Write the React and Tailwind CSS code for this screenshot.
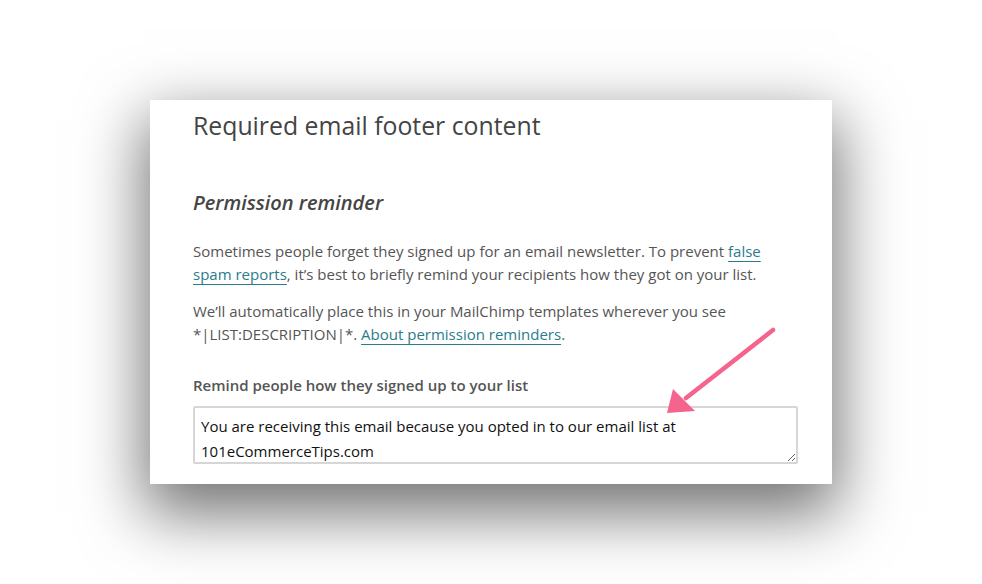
import React from 'react';

const Arrow = () => (
  <svg className="absolute left-[660px] top-[322px]" width="125" height="100" viewBox="0 0 125 100">
    {/* shaft */}
    <line x1="113" y1="8" x2="26" y2="76" stroke="#f5648c" strokeWidth="4.5" strokeLinecap="round" />
    {/* head */}
    <polygon points="7,91 13,67 35,89" fill="#f5648c" />
  </svg>
);

const App = () => {
  return (
    <div className="relative w-[982px] h-[584px] bg-white overflow-hidden" style={{ fontFamily: '"Open Sans", sans-serif' }}>
      <div className="pt-[100px] pl-[150px]">
        <div className="w-[682px] h-[384px] bg-white pl-[43px] pr-[34px] pt-[8px] shadow-[0_24px_60px_6px_rgba(0,0,0,0.55)]">
          <h1 className="text-[24.8px] leading-[34px] text-[#444]">Required email footer content</h1>

          <h2 className="mt-[47px] text-[20px] leading-[28px] italic font-semibold text-[#454545]">
            Permission reminder
          </h2>

          <p className="mt-[23px] text-[15px] leading-[23px] text-[#555]">
            Sometimes people forget they signed up for an email newsletter. To prevent{' '}
            <a className="text-[#2a7c8c] underline underline-offset-[4px] decoration-[#2a7c8c]">false spam reports</a>, it’s
            best to briefly remind your recipients how they got on your list.
          </p>

          <p className="mt-[14px] text-[15px] leading-[23px] text-[#555]">
            We’ll automatically place this in your MailChimp templates wherever you see *|LIST:DESCRIPTION|*.{' '}
            <a className="text-[#2a7c8c] underline underline-offset-[4px] decoration-[#2a7c8c]">About permission reminders</a>.
          </p>

          <label className="block mt-[29px] text-[15px] leading-[20px] font-semibold text-[#555]">
            Remind people how they signed up to your list
          </label>

          <textarea
            className="block mt-[11px] w-[605px] h-[58px] border-2 border-[#d6d6d6] rounded-[2px] px-[6px] pt-[6px] pb-[2px] text-[15px] leading-[25px] text-[#111] resize-y outline-none overflow-hidden"
            style={{ fontFamily: '"Open Sans", sans-serif' }}
            defaultValue="You are receiving this email because you opted in to our email list at 101eCommerceTips.com"
          />
        </div>
      </div>
      <Arrow />
    </div>
  );
};

export default App;
